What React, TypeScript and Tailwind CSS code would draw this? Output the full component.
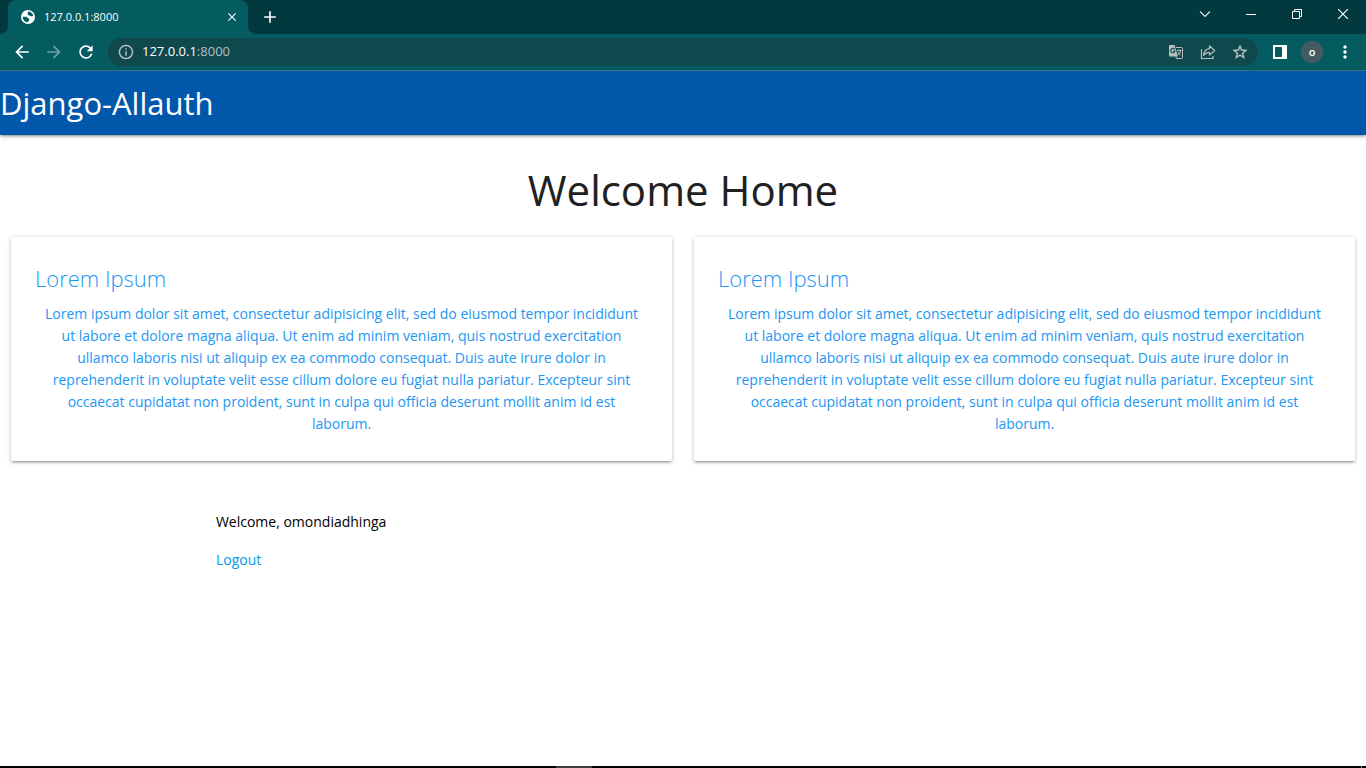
import {
  MdAdd,
  MdArrowBack,
  MdArrowForward,
  MdClose,
  MdInfoOutline,
  MdMoreVert,
  MdRefresh,
  MdStarBorder,
} from "react-icons/md";

const LOREM =
  "Lorem ipsum dolor sit amet, consectetur adipisicing elit, sed do eiusmod tempor incididunt ut labore et dolore magna aliqua. Ut enim ad minim veniam, quis nostrud exercitation ullamco laboris nisi ut aliquip ex ea commodo consequat. Duis aute irure dolor in reprehenderit in voluptate velit esse cillum dolore eu fugiat nulla pariatur. Excepteur sint occaecat cupidatat non proident, sunt in culpa qui officia deserunt mollit anim id est laborum.";

function GlobeIcon() {
  return (
    <svg width="16" height="16" viewBox="0 0 16 16">
      <circle cx="8" cy="8" r="7" fill="#fff" />
      <path
        d="M8.300 2.600c2.200.1 4.200 1.600 4.900 3.900-.8 1-1.800 1.300-2.700.6-.6-.5-1.500-.3-2.200-1-.8-.8-.9-2.300 0-3.500zM2.700 7.800h3.100c1.200 0 1.500.7 2 1.200.7.600 1.700.5 1.600 1.700-.1 1-1.300 1-1.500 2.600-2.900 0-5.200-2.500-5.200-5.500z"
        fill="#045c61"
      />
    </svg>
  );
}

function TranslateIcon() {
  return (
    <svg width="16" height="16" viewBox="0 0 16 16" fill="none">
      <path d="M2 1h4.500L10 12.500H2a1 1 0 0 1-1-1V2a1 1 0 0 1 1-1z" fill="#b9bfc0" />
      <path d="M8 3.500h5.500a1 1 0 0 1 1 1v9a1 1 0 0 1-1 1H8.500L8 12.500" stroke="#b9bfc0" />
      <path d="M6.700 5.300A2.200 2.200 0 1 0 7 7H5" stroke="#0f494e" strokeWidth="1.1" />
      <path d="M9 6.500h4.500M11.300 5.500v1M12.700 6.500c-.4 2-1.400 3.300-2.600 4.300M10 8c.5 1.200 1.500 2.300 2.800 3.200" stroke="#b9bfc0" />
    </svg>
  );
}

function ShareIcon() {
  return (
    <svg width="16" height="16" viewBox="0 0 16 16" fill="none" stroke="#b9bfc0" strokeWidth="1.2">
      <path d="M1.500 5v9.500h11.500V12" />
      <path d="M9.500 2v2.700C6 5 4 7.500 3.600 11.300 5 9.200 6.800 8.300 9.500 8.300V11L14.800 6.500z" strokeLinejoin="round" />
    </svg>
  );
}

function TabStrip() {
  return (
    <div className="flex h-[34px] justify-between bg-[#02393e]">
      <div className="flex pl-2">
        <div className="relative flex w-60 items-center rounded-t-lg bg-[#045c61] pl-3 pr-2 text-white">
          <svg className="absolute -left-2 bottom-0" width="8" height="8" viewBox="0 0 8 8">
            <path d="M8 0v8H0a8 8 0 0 0 8-8z" fill="#045c61" />
          </svg>
          <svg className="absolute -right-2 bottom-0" width="8" height="8" viewBox="0 0 8 8">
            <path d="M0 0v8h8a8 8 0 0 1-8-8z" fill="#045c61" />
          </svg>
          <GlobeIcon />
          <span className="ml-2 flex-1 text-[11px]">127.0.0.1:8000</span>
          <button type="button" aria-label="Close tab" className="grid size-4 place-items-center">
            <MdClose size={14} />
          </button>
        </div>
        <button type="button" aria-label="New tab" className="ml-3 grid w-5 place-items-center text-white">
          <MdAdd size={20} />
        </button>
      </div>
      <div className="flex h-7 text-white">
        <button type="button" aria-label="Search tabs" className="grid w-[46px] place-items-center">
          <svg width="12" height="12" viewBox="0 0 12 12" fill="none" stroke="#dde5e6" strokeWidth="1.2">
            <path d="M1 3.500l5 5 5-5" />
          </svg>
        </button>
        <button type="button" aria-label="Minimize" className="grid w-[46px] place-items-center">
          <svg width="10" height="10" viewBox="0 0 10 10" fill="none" stroke="currentColor">
            <path d="M0 5.500h10" />
          </svg>
        </button>
        <button type="button" aria-label="Restore" className="grid w-[46px] place-items-center">
          <svg width="10" height="10" viewBox="0 0 10 10" fill="none" stroke="currentColor">
            <path d="M.5 2.500h7v7h-7zM2.500 2.500v-2h7v7h-2" />
          </svg>
        </button>
        <button type="button" aria-label="Close" className="grid w-[46px] place-items-center">
          <svg width="10" height="10" viewBox="0 0 10 10" fill="none" stroke="currentColor" strokeWidth="1.2">
            <path d="M0 0l10 10M10 0L0 10" />
          </svg>
        </button>
      </div>
    </div>
  );
}

function Toolbar() {
  return (
    <div className="flex h-[37px] items-center border-b border-[#40797d] bg-[#045c61] pl-3 pr-[11px] text-white">
      <button type="button" aria-label="Back" className="mr-3">
        <MdArrowBack size={20} />
      </button>
      <button type="button" aria-label="Forward" className="mr-3 text-[#6da0a3]">
        <MdArrowForward size={20} />
      </button>
      <button type="button" aria-label="Reload">
        <MdRefresh size={20} />
      </button>
      <div className="ml-3 flex h-7 flex-1 items-center rounded-full bg-[#0f494e] px-[10px] text-[#b9bfc0]">
        <MdInfoOutline size={16} viewBox="1 1 22 22" />
        <span className="ml-2 flex-1 text-[13px]">
          <span className="text-white">127.0.0.1</span>:8000
        </span>
        <div className="flex gap-4">
          <button type="button" aria-label="Translate this page">
            <TranslateIcon />
          </button>
          <button type="button" aria-label="Share this page">
            <ShareIcon />
          </button>
          <button type="button" aria-label="Bookmark this tab">
            <MdStarBorder size={16} viewBox="1 1 22 22" stroke="currentColor" strokeWidth="0.5" />
          </button>
        </div>
      </div>
      <button type="button" aria-label="Side panel" className="ml-[14px]">
        <svg width="16" height="16" viewBox="0 0 16 16">
          <path d="M1 1h14v14H1zM3 3v10h7V3z" fill="#fff" fillRule="evenodd" />
        </svg>
      </button>
      <button
        type="button"
        aria-label="Profile"
        className="ml-[13px] flex size-[22px] items-center justify-center rounded-full bg-[#455a64] pb-0.5 text-[11px] font-semibold leading-none"
      >
        o
      </button>
      <button type="button" aria-label="Menu" className="ml-3">
        <MdMoreVert size={20} />
      </button>
    </div>
  );
}

function Card() {
  return (
    <article className="rounded-[2px] bg-white px-6 pb-[26px] pt-6 text-center text-[#2196f3] shadow-[0_2px_2px_0_rgba(0,0,0,0.14),0_3px_1px_-2px_rgba(0,0,0,0.12),0_1px_5px_0_rgba(0,0,0,0.2)]">
      <h2 className="mb-2 text-left text-[22px] font-light leading-[34px]">Lorem Ipsum</h2>
      <p className="px-1 text-[14px] leading-[22px]">{LOREM}</p>
    </article>
  );
}

export default function App() {
  return (
    <div className="flex min-h-screen flex-col bg-white font-['Open_Sans',sans-serif] text-[#212121]">
      <TabStrip />
      <Toolbar />
      <header className="z-10 flex h-16 items-center bg-[#0158ab] text-white shadow-[0_2px_2px_0_rgba(0,0,0,0.14),0_3px_1px_-2px_rgba(0,0,0,0.12),0_1px_5px_0_rgba(0,0,0,0.2)]">
        <a href="#" className="text-[31px]">
          Django-Allauth
        </a>
      </header>
      <main className="flex-1">
        <h1 className="mt-7 text-center text-[42px] leading-[54px]">Welcome Home</h1>
        <section className="mt-5 grid grid-cols-2 gap-[22px] px-[11px]">
          <Card />
          <Card />
        </section>
        <section className="mx-auto mt-[50px] w-[70%] px-[11px] text-[14px] leading-[22px]">
          <p className="text-black">Welcome, omondiadhinga</p>
          <a href="#" className="mt-4 inline-block text-[#039be5]">
            Logout
          </a>
        </section>
      </main>
      <div className="flex h-[2px] bg-black">
        <div className="ml-[556px] w-9 bg-[#3c3c3c]" />
        <div className="ml-auto mr-1 w-px bg-[#777777]" />
      </div>
    </div>
  );
}
